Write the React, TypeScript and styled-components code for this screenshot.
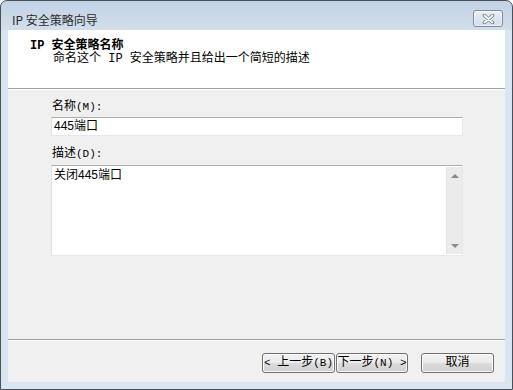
import React from "react";
import styled, { createGlobalStyle } from "styled-components";

const GlobalStyle = createGlobalStyle`
  html, body {
    margin: 0;
    padding: 0;
    background: #ffffff;
  }
`;

const dialogFont = `"Liberation Mono", "Noto Sans CJK SC", monospace`;
const editFont = `"Liberation Sans", "Noto Sans CJK SC", sans-serif`;

export const Window = styled.div`
  width: 513px;
  height: 390px;
  box-sizing: border-box;
  border: 1px solid #4c4f54;
  border-radius: 7px 7px 0 0;
  background: linear-gradient(to bottom, #c3d3e6 0px, #d2deeb 29px, #dae5f2 29px, #dae5f2 100%);
  display: flex;
  flex-direction: column;
  overflow: hidden;
`;

export const TitleBar = styled.div`
  height: 29px;
  flex: none;
  display: flex;
  align-items: flex-start;
  justify-content: space-between;
  padding: 9px 9px 0 11px;
  box-sizing: border-box;
`;

export const TitleText = styled.span`
  margin-top: 3px;
  font-family: "Noto Sans CJK SC", sans-serif;
  font-size: 12px;
  line-height: 14px;
  color: #2b2b2b;
`;

export const CloseButton = styled.div`
  width: 30px;
  height: 17px;
  box-sizing: border-box;
  border: 1px solid #7f8c9d;
  border-radius: 3px;
  background: linear-gradient(to bottom, #e9eff6, #d3dde9);
  box-shadow: inset 0 0 0 1px rgba(255, 255, 255, 0.5);
  display: flex;
  align-items: center;
  justify-content: center;
`;

export const Client = styled.div`
  flex: 1;
  margin: 0 7px 7px;
  background: #f0f0f0;
  display: flex;
  flex-direction: column;
`;

export const Header = styled.div`
  height: 58px;
  flex: none;
  box-sizing: border-box;
  background: #ffffff;
  padding: 10px 0 0 22px;
  font-family: ${dialogFont};
  font-size: 12px;
  line-height: 13px;
  color: #000;
`;

export const HeaderTitle = styled.div`
  font-weight: bold;
`;

export const HeaderSubtitle = styled.div`
  padding-left: 23px;
`;

export const Separator = styled.div`
  height: 2px;
  flex: none;
  box-sizing: border-box;
  border-top: 1px solid #a0a0a0;
  border-bottom: 1px solid #ffffff;
`;

export const Body = styled.div`
  flex: 1;
  padding: 10px 0 0 43px;
  display: flex;
  flex-direction: column;
`;

export const Key = styled.span`
  font-size: 11px;
`;

export const Label = styled.div<{ $gap?: number }>`
  padding-left: 1px;
  margin-top: ${(p) => p.$gap ?? 0}px;
  font-family: ${dialogFont};
  font-size: 12px;
  line-height: 14px;
  color: #000;
`;

export const TextInput = styled.div`
  width: 412px;
  height: 19px;
  margin-top: 3px;
  box-sizing: border-box;
  background: #ffffff;
  border: 1px solid #e3e9ef;
  border-top-color: #abadb3;
  border-left-color: #dbdfe6;
  padding: 0 2px;
  font-family: ${editFont};
  font-size: 12px;
  line-height: 17px;
  color: #000;
`;

export const TextArea = styled.div`
  width: 412px;
  height: 91px;
  margin-top: 4px;
  box-sizing: border-box;
  background: #ffffff;
  border: 1px solid #e3e9ef;
  border-top-color: #abadb3;
  border-left-color: #dbdfe6;
  display: flex;
`;

export const TextAreaContent = styled.div`
  flex: 1;
  padding: 2px 2px;
  font-family: ${editFont};
  font-size: 12px;
  line-height: 14px;
  color: #000;
`;

export const ScrollBar = styled.div`
  width: 16px;
  margin: 1px 0;
  background: #ebebeb;
  border-left: 1px solid #e4e4e4;
  display: flex;
  flex-direction: column;
  justify-content: space-between;
  align-items: center;
  padding: 7px 0 6px;
  box-sizing: border-box;
`;

export const Arrow = styled.div<{ $dir: "up" | "down" }>`
  width: 0;
  height: 0;
  border-left: 4px solid transparent;
  border-right: 4px solid transparent;
  ${(p) =>
    p.$dir === "up"
      ? "border-bottom: 4px solid #8a8a8a;"
      : "border-top: 4px solid #8a8a8a;"}
`;

export const Footer = styled.div`
  height: 41px;
  flex: none;
  box-sizing: border-box;
  display: flex;
  justify-content: flex-end;
  align-items: flex-start;
  padding: 12px 11px 0 0;
`;

export const Button = styled.div<{ $width: number; $gap?: number }>`
  width: ${(p) => p.$width}px;
  height: 20px;
  margin-left: ${(p) => p.$gap ?? 0}px;
  box-sizing: border-box;
  border: 1px solid #707070;
  border-radius: 3px;
  background: linear-gradient(to bottom, #f2f2f2 0%, #ebebeb 50%, #dddddd 50%, #cfcfcf 100%);
  box-shadow: inset 0 0 0 1px #fbfbfb;
  display: flex;
  align-items: center;
  justify-content: center;
  font-family: ${dialogFont};
  font-size: 12px;
  line-height: 14px;
  color: #000;
  white-space: nowrap;
`;

const CloseGlyph = () => (
  <svg width="13" height="10" viewBox="0 0 13 10">
    <path d="M2.5 1.5 L10.5 8.5 M10.5 1.5 L2.5 8.5" stroke="#6f7a88" strokeWidth="3.6" strokeLinecap="round" />
    <path d="M2.5 1.5 L10.5 8.5 M10.5 1.5 L2.5 8.5" stroke="#ffffff" strokeWidth="1.8" strokeLinecap="round" />
  </svg>
);

const App = () => {
  return (
    <>
      <GlobalStyle />
      <Window>
        <TitleBar>
          <TitleText>IP 安全策略向导</TitleText>
          <CloseButton>
            <CloseGlyph />
          </CloseButton>
        </TitleBar>
        <Client>
          <Header>
            <HeaderTitle>IP 安全策略名称</HeaderTitle>
            <HeaderSubtitle>命名这个 IP 安全策略并且给出一个简短的描述</HeaderSubtitle>
          </Header>
          <Separator />
          <Body>
            <Label>
              名称<Key>(M):</Key>
            </Label>
            <TextInput>445端口</TextInput>
            <Label $gap={11}>
              描述<Key>(D):</Key>
            </Label>
            <TextArea>
              <TextAreaContent>关闭445端口</TextAreaContent>
              <ScrollBar>
                <Arrow $dir="up" />
                <Arrow $dir="down" />
              </ScrollBar>
            </TextArea>
          </Body>
          <Separator />
          <Footer>
            <Button $width={73}>
              <Key>&lt;&nbsp;</Key>上一步<Key>(B)</Key>
            </Button>
            <Button $width={72} $gap={1}>
              下一步<Key>(N)&nbsp;&gt;</Key>
            </Button>
            <Button $width={73} $gap={13}>
              取消
            </Button>
          </Footer>
        </Client>
      </Window>
    </>
  );
};

export default App;
